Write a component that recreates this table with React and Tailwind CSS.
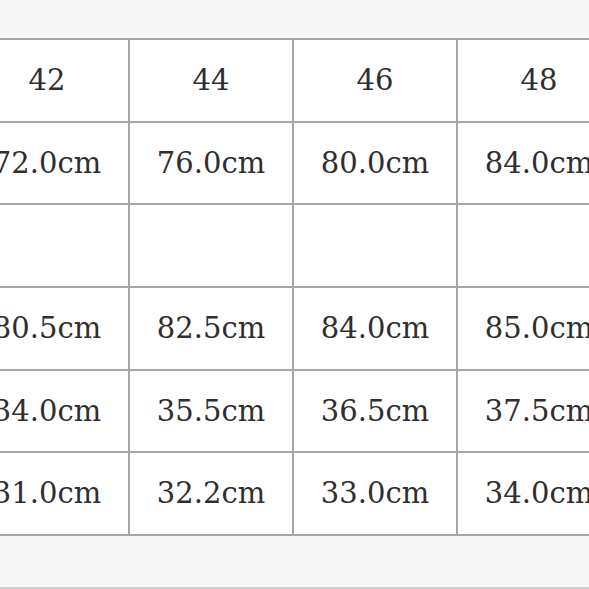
import React from "react";

const sizes = ["42", "44", "46", "48", "50"];

const rows = [
  ["72.0cm", "76.0cm", "80.0cm", "84.0cm", "88.0cm"],
  ["", "", "", "", ""],
  ["80.5cm", "82.5cm", "84.0cm", "85.0cm", "86.0cm"],
  ["34.0cm", "35.5cm", "36.5cm", "37.5cm", "38.5cm"],
  ["31.0cm", "32.2cm", "33.0cm", "34.0cm", "35.0cm"],
];

const Cell = ({ children }) => (
  <div className="flex h-[80.7px] items-center justify-center bg-white text-[29px] leading-none text-[#2f2f2f]">
    {children}
  </div>
);

const App = () => {
  return (
    <div
      className="h-[589px] w-[589px] overflow-hidden border-b-2 border-[#cfcfcf] bg-[#f7f7f7]"
      style={{ fontFamily: '"DejaVu Serif", "Liberation Serif", serif' }}
    >
      <div className="ml-[-36px] mt-[38px] grid w-max grid-cols-[repeat(5,162px)] gap-[2px] bg-[#a6a6a6] p-[2px]">
        {sizes.map((s) => (
          <Cell key={s}>{s}</Cell>
        ))}
        {rows.map((row, i) =>
          row.map((v, j) => <Cell key={i + "-" + j}>{v}</Cell>)
        )}
      </div>
    </div>
  );
};

export default App;
